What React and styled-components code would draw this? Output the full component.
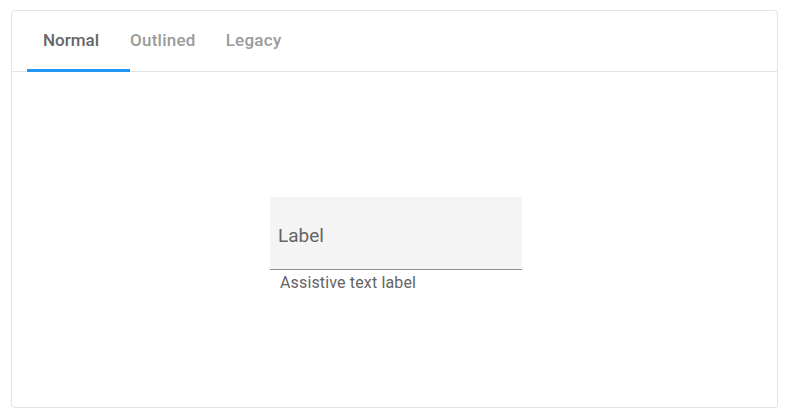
import React from "react";
import styled, { createGlobalStyle } from "styled-components";

const Global = createGlobalStyle`
  html, body { margin: 0; padding: 0; background: #ffffff; }
  body { font-family: Roboto, "Liberation Sans", sans-serif; }
  * { box-sizing: border-box; }
`;

const Page = styled.div`
  width: 789px;
  height: 416px;
  padding: 10px 11px 8px 11px;
`;

const Card = styled.div`
  height: 398px;
  border: 1px solid #e2e2e2;
  border-radius: 4px;
  display: flex;
  flex-direction: column;
`;

const TabBar = styled.div`
  height: 61px;
  border-bottom: 1px solid #e4e4e4;
  padding-left: 15px;
  display: flex;
  align-items: stretch;
`;

const Tab = styled.button`
  position: relative;
  border: none;
  background: none;
  padding: 0 ${(p) => p.$padRight}px 2px ${(p) => p.$padLeft}px;
  font-family: Roboto, "Liberation Sans", sans-serif;
  font-size: 17px;
  font-weight: 500;
  letter-spacing: ${(p) => (p.$active ? "0" : "0.25px")};
  color: ${(p) => (p.$active ? "#666666" : "#9a9a9a")};
  display: flex;
  align-items: center;
  cursor: pointer;
`;

const Indicator = styled.span`
  position: absolute;
  left: 0;
  right: 0;
  bottom: -1px;
  height: 3px;
  background: #2196f3;
`;

const Body = styled.div`
  flex: 1;
  display: flex;
  align-items: center;
  justify-content: center;
  padding-left: 3px;
  padding-top: 9px;
`;

const Field = styled.div`
  width: 252px;
  display: flex;
  flex-direction: column;
`;

const Input = styled.div`
  height: 73px;
  background: #f4f4f4;
  border-radius: 4px 4px 0 0;
  border-bottom: 1px solid #8c8c8c;
  display: flex;
  align-items: center;
  padding: 5px 8px 0 8px;
  font-size: 19px;
  color: #646464;
`;

const Helper = styled.div`
  padding: 3px 10px 0 10px;
  font-size: 16px;
  letter-spacing: 0.15px;
  color: #646464;
  line-height: 19px;
`;

const tabs = [
  { label: "Normal", active: true, l: 16, r: 31 },
  { label: "Outlined", l: 0, r: 30 },
  { label: "Legacy", l: 0, r: 16 },
];

export default function App() {
  return (
    <>
      <Global />
      <Page>
        <Card>
          <TabBar>
            {tabs.map((t) => (
              <Tab key={t.label} $active={t.active} $padLeft={t.l} $padRight={t.r}>
                {t.label}
                {t.active && <Indicator />}
              </Tab>
            ))}
          </TabBar>
          <Body>
            <Field>
              <Input>Label</Input>
              <Helper>Assistive text label</Helper>
            </Field>
          </Body>
        </Card>
      </Page>
    </>
  );
}
